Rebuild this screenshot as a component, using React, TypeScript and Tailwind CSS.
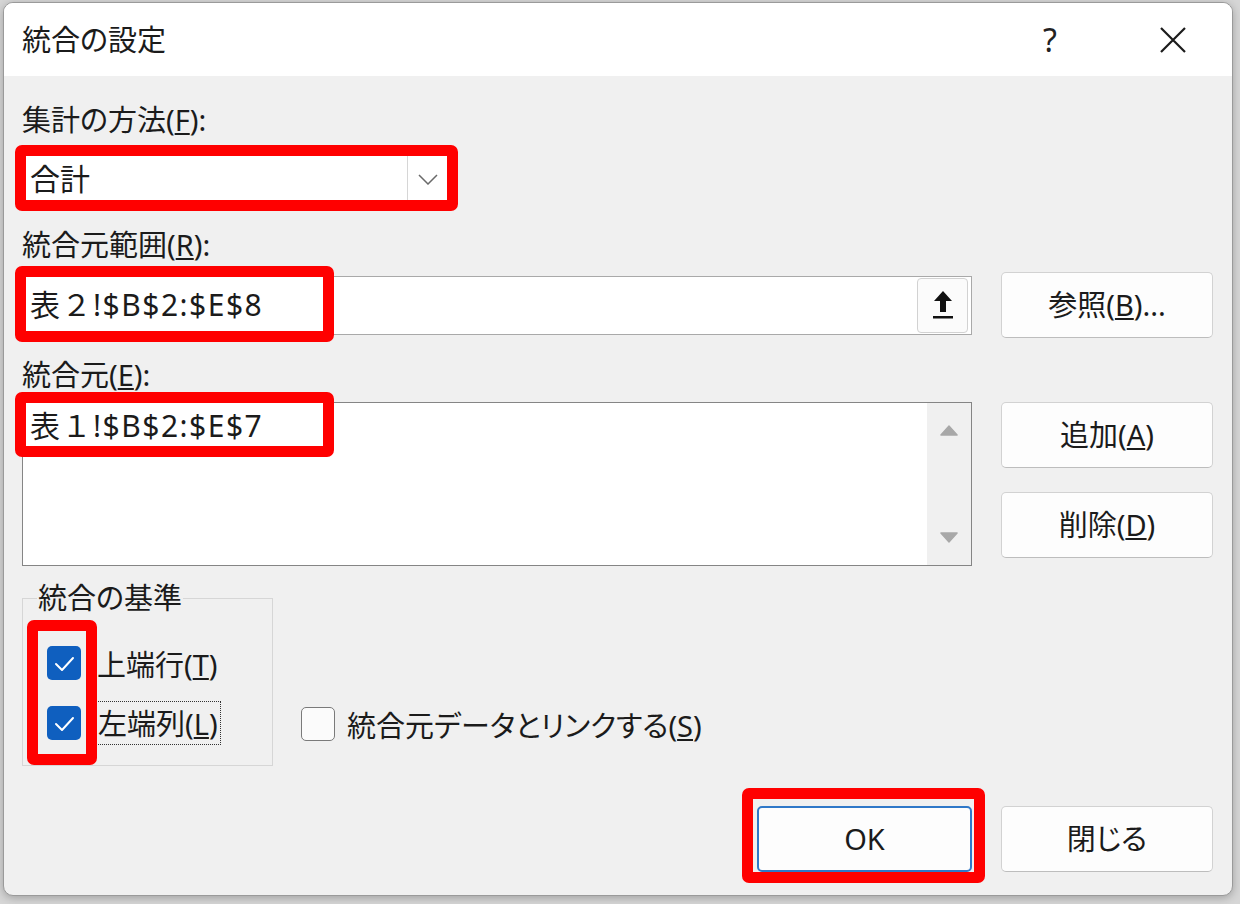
import React from 'react';

const font = "font-['Noto_Sans','Noto_Sans_CJK_JP',sans-serif] [font-feature-settings:'palt']";

const Btn = ({ children, primary }: { children: React.ReactNode; primary?: boolean }) => (
  <div
    className={`flex h-[66px] items-center justify-center rounded-[5px] bg-[#fdfdfd] text-[29px] text-[#1b1b1b] ${
      primary
        ? 'w-[215px] border-2 border-[#2f78c8]'
        : 'w-[212px] border border-[#d2d2d2] border-b-[#bdbdbd]'
    }`}
  >
    {children}
  </div>
);

const Checked = () => (
  <div className="flex h-[34px] w-[34px] shrink-0 items-center justify-center rounded-[5px] bg-[#0f5fbf]">
    <svg width="34" height="34" viewBox="0 0 34 34">
      <polyline points="9,18 15,24 26,12" fill="none" stroke="#ffffff" strokeWidth="2" strokeLinecap="round" strokeLinejoin="round" />
    </svg>
  </div>
);

const Red = ({ cls }: { cls: string }) => (
  <div className={`pointer-events-none absolute rounded-[7px] border-[11px] border-[#ff0000] ${cls}`} />
);

export default function App() {
  return (
    <div className={`relative h-[904px] w-[1240px] overflow-hidden bg-[#d6d6d6] pl-[3px] pt-[2px] ${font} text-[#1b1b1b]`}>
      <div className="w-[1230px] overflow-hidden rounded-[10px] border border-[#9a9a9a] bg-[#f0f0f0] shadow-[0_2px_8px_rgba(0,0,0,0.25)]">
        {/* title bar */}
        <div className="flex h-[73px] items-center bg-white pl-[18px]">
          <div className="flex-1 text-[29px] leading-none">統合の設定</div>
          <div className="w-[40px] text-center text-[32px] leading-none text-[#222]">?</div>
          <div className="ml-[80px] mr-[36px] flex w-[46px] justify-center">
            <svg width="28" height="28" viewBox="0 0 28 28">
              <path d="M2 2 L26 26 M26 2 L2 26" stroke="#1b1b1b" strokeWidth="2.2" />
            </svg>
          </div>
        </div>

        {/* body */}
        <div className="flex flex-col pb-[23px] pl-[18px] pr-[19px] text-[29px]">
          <div className="mt-[26px] h-[36px] leading-[36px]">
            集計の方法(<u>F</u>):
          </div>
          <div className="mt-[15px] flex h-[52px] w-[426px] items-center border border-[#a0a0a0] bg-white">
            <div className="flex-1 pl-[7px] text-[30px] leading-none">合計</div>
            <div className="flex h-full w-[40px] items-center justify-center border-l border-[#d6d6d6]">
              <svg width="20" height="11" viewBox="0 0 20 11">
                <polyline points="1,1 10,10 19,1" fill="none" stroke="#6a6a6a" strokeWidth="1.5" />
              </svg>
            </div>
          </div>

          <div className="mt-[22px] h-[36px] leading-[36px]">
            統合元範囲(<u>R</u>):
          </div>
          <div className="mt-[9px] flex h-[66px] items-center gap-[29px]">
            <div className="flex h-[59px] w-[950px] items-center border border-[#a9a9a9] bg-white">
              <div className="flex-1 pl-[7px] text-[30px] leading-none tracking-[1.5px] [font-feature-settings:normal]">
                表２!$B$2:$E$8
              </div>
              <div className="mr-[3px] flex h-[55px] w-[51px] items-center justify-center rounded-[4px] border border-[#d2d2d2] bg-[#fbfbfb]">
                <svg width="22" height="30" viewBox="0 0 22 30">
                  <path d="M11 1 L20 11 L14 11 L14 22 L8 22 L8 11 L2 11 Z" fill="#111" />
                  <rect x="1" y="26" width="20" height="2.5" fill="#111" />
                </svg>
              </div>
            </div>
            <Btn>
              参照(<u>B</u>)...
            </Btn>
          </div>

          <div className="mt-[19px] h-[36px] leading-[36px]">
            統合元(<u>E</u>):
          </div>
          <div className="mt-[9px] flex gap-[29px]">
            <div className="flex h-[164px] w-[950px] border border-[#858585] bg-white">
              <div className="flex-1 pl-[7px] pt-[5px] text-[30px] leading-[36px] tracking-[1.5px] [font-feature-settings:normal]">
                表１!$B$2:$E$7
              </div>
              <div className="flex w-[44px] flex-col items-center justify-between bg-[#f0f0f0] py-[22px]">
                <svg width="18" height="11" viewBox="0 0 20 12">
                  <path d="M10 1 L19 11 L1 11 Z" fill="#a8a8a8" strokeLinejoin="round" stroke="#a8a8a8" strokeWidth="1.5" />
                </svg>
                <svg width="18" height="11" viewBox="0 0 20 12">
                  <path d="M10 11 L19 1 L1 1 Z" fill="#a8a8a8" strokeLinejoin="round" stroke="#a8a8a8" strokeWidth="1.5" />
                </svg>
              </div>
            </div>
            <div className="flex flex-col gap-[24px]">
              <Btn>
                追加(<u>A</u>)
              </Btn>
              <Btn>
                削除(<u>D</u>)
              </Btn>
            </div>
          </div>

          <div className="mt-[17px] flex items-end gap-[28px]">
            <fieldset className="w-[251px] border border-[#d6d6d6] pb-[20px] pl-[24px] pt-[28px]">
              <legend className="-ml-[10px] px-[1px] text-[29px] leading-[30px]">統合の基準</legend>
              <div className="flex h-[44px] items-center gap-[14px]">
                <Checked />
                <span className="px-[2px] pt-[4px]">
                  上端行(<u>T</u>)
                </span>
              </div>
              <div className="mt-[16px] flex h-[44px] items-center gap-[14px]">
                <Checked />
                <span className="border border-dotted border-[#333] px-[2px] pt-[2px] leading-[40px]">
                  左端列(<u>L</u>)
                </span>
              </div>
            </fieldset>
            <div className="mb-[20px] flex h-[44px] items-center gap-[12px]">
              <div className="h-[34px] w-[34px] rounded-[5px] border-[1.5px] border-[#7a7a7a] bg-[#fbfbfb]" />
              <span className="pt-[4px]">
                統合元データとリンクする(<u>S</u>)
              </span>
            </div>
          </div>

          <div className="mt-[40px] flex justify-end gap-[29px]">
            <Btn primary>OK</Btn>
            <Btn>閉じる</Btn>
          </div>
        </div>
      </div>

      <Red cls="left-[15px] top-[145px] h-[66px] w-[443px]" />
      <Red cls="left-[15px] top-[266px] h-[76px] w-[319px]" />
      <Red cls="left-[15px] top-[392px] h-[65px] w-[319px]" />
      <Red cls="left-[27px] top-[620px] h-[145px] w-[70px]" />
      <Red cls="left-[742px] top-[788px] h-[95px] w-[243px]" />
    </div>
  );
}
